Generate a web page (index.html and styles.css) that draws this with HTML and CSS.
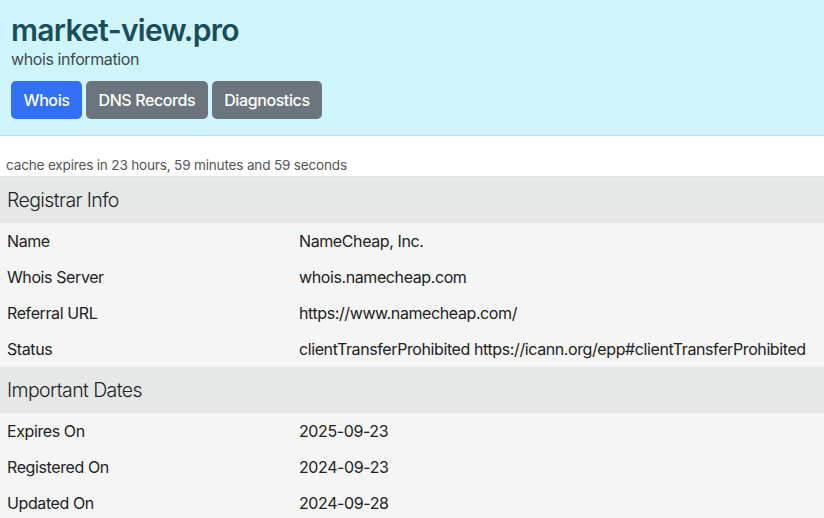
FILE: index.html
```html
<!DOCTYPE html>
<html>
<head>
<meta charset="utf-8">
<link rel="stylesheet" href="styles.css">
</head>
<body>
<header class="hero">
  <h1 class="title">market-view.pro</h1>
  <p class="subtitle">whois information</p>
  <nav class="tabs">
    <a class="btn btn-primary">Whois</a>
    <a class="btn btn-secondary">DNS Records</a>
    <a class="btn btn-secondary">Diagnostics</a>
  </nav>
</header>
<p class="cache">cache expires in 23 hours, 59 minutes and 59 seconds</p>
<table class="info">
  <colgroup><col class="col-key"><col></colgroup>
  <tbody>
    <tr class="section"><th colspan="2">Registrar Info</th></tr>
    <tr><td>Name</td><td>NameCheap, Inc.</td></tr>
    <tr><td>Whois Server</td><td>whois.namecheap.com</td></tr>
    <tr><td>Referral URL</td><td>https://www.namecheap.com/</td></tr>
    <tr><td>Status</td><td>clientTransferProhibited https://icann.org/epp#clientTransferProhibited</td></tr>
    <tr class="section"><th colspan="2">Important Dates</th></tr>
    <tr><td>Expires On</td><td>2025-09-23</td></tr>
    <tr><td>Registered On</td><td>2024-09-23</td></tr>
    <tr><td>Updated On</td><td>2024-09-28</td></tr>
  </tbody>
</table>
</body>
</html>
```
FILE: styles.css
```css
* { box-sizing: border-box; }
body {
  margin: 0;
  font-family: Inter, "Liberation Sans", sans-serif;
  color: #212529;
  background: #fff;
  font-size: 16px;
}
.hero {
  background: #cff4fc;
  border-bottom: 1px solid #9eeaf9;
  padding: 12px 11px 16px;
}
.title {
  margin: 0;
  font-size: 30px;
  font-weight: 600;
  line-height: 36px;
  color: #1c4e5a;
  letter-spacing: -0.7px;
}
.subtitle {
  margin: 1px 0 12px;
  font-size: 16px;
  line-height: 20px;
  color: #3e4a4e;
  letter-spacing: -0.4px;
}
.tabs {
  display: flex;
  gap: 4px;
}
.btn {
  display: inline-block;
  padding: 0 12.5px;
  height: 38px;
  line-height: 38px;
  border-radius: 5px;
  color: #fff;
  font-size: 16px;
  font-weight: 500;
  letter-spacing: -0.4px;
}
.btn-primary { background: #3170f6; width: 71px; text-align: center; padding: 0; }
.btn-secondary { background: #6c757d; }
.cache {
  margin: 19px 0 0;
  padding: 0 6px;
  font-size: 13.6px;
  line-height: 21px;
  color: #555;
  letter-spacing: -0.2px;
  border-bottom: 1px solid #dee2e6;
}
.info {
  width: 100%;
  border-collapse: collapse;
  table-layout: fixed;
}
.col-key { width: 292px; }
.info th {
  text-align: left;
  font-weight: 300;
  font-size: 19.5px;
  letter-spacing: -0.6px;
  background: #e6e7e7;
  height: 46px;
  padding: 0 7px;
}
.info td {
  background: #f5f5f5;
  height: 36px;
  padding: 0 7px;
  font-size: 16px;
  letter-spacing: -0.4px;
  color: #222;
  white-space: nowrap;
}
```
